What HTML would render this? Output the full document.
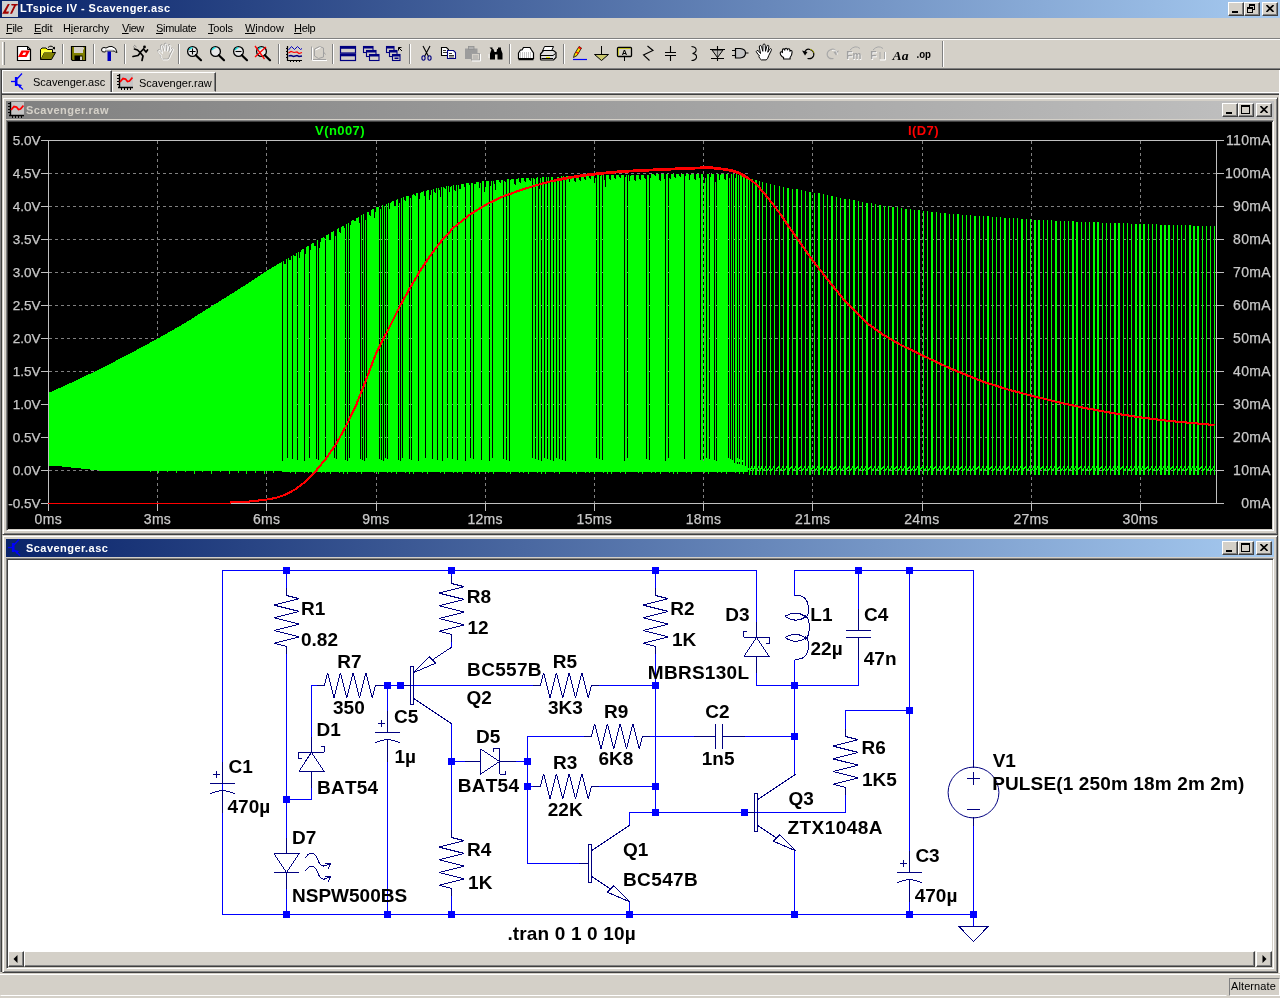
<!DOCTYPE html><html><head><meta charset="utf-8"><title>LTspice IV - Scavenger.asc</title><style>
html,body{margin:0;padding:0;}
body{will-change:transform;width:1280px;height:998px;overflow:hidden;background:#d4d0c8;position:relative;
 font-family:"Liberation Sans",sans-serif;font-size:11px;color:#000;}
div,span,svg{position:absolute;box-sizing:border-box;}
.t{white-space:pre;line-height:1;}
.titlebar{left:0;top:0;width:1280px;height:18px;background:linear-gradient(90deg,#0a246a 0%,#a6caf0 100%);}
.ttext{color:#fff;font-weight:bold;font-size:11px;letter-spacing:0.42px;}
.cap{background:#d4d0c8;border:1px solid;border-color:#fff #404040 #404040 #fff;box-shadow:inset -1px -1px 0 #808080;width:16px;height:14px;}
.menu span{top:23px;}
.menu u{text-decoration:underline;}
.hline{height:1px;left:0;width:1280px;}
.vsep{width:2px;border-left:1px solid #808080;border-right:1px solid #fff;top:44px;height:20px;}
.win{background:#d4d0c8;border:1px solid;border-color:#d4d0c8 #404040 #404040 #d4d0c8;box-shadow:inset 1px 1px 0 #fff, inset -1px -1px 0 #808080;}
.wtitle{left:3px;top:3px;height:18px;}
.wtitle.active{background:linear-gradient(90deg,#0a246a 0%,#a6caf0 100%);}
.wtitle.inactive{background:linear-gradient(90deg,#808080 0%,#c0c0c0 100%);}
.client{border:1px solid;border-color:#808080 #fff #fff #808080;box-shadow:inset 1px 1px 0 #404040, inset -1px -1px 0 #d4d0c8;}
</style></head><body><div class="titlebar"><svg style="left:2px;top:1px" width="16" height="16" viewBox="0 0 16 16"><rect x="0" y="0" width="16" height="16" fill="#d0d0d0"/><path d="M5.8 3 H7.8 L3.900 10.500 H7 L6.300 12.800 H0.200 Z" fill="#a00000"/><path d="M9.200 3 H16 L15.400 4.500 H14 L10 12.800 H8 L12 4.500 H9.600 Z" fill="#a00000"/></svg><span class="t ttext" style="left:20px;top:3px">LTspice IV - Scavenger.asc</span><div class="cap" style="left:1228px;top:2px"><div style="left:3px;top:8px;width:6px;height:2px;background:#000"></div></div><div class="cap" style="left:1244px;top:2px"><div style="left:4px;top:1px;width:6px;height:6px;border:1px solid #000;border-top-width:2px"></div><div style="left:2px;top:4px;width:6px;height:6px;border:1px solid #000;border-top-width:2px;background:#d4d0c8"></div></div><div class="cap" style="left:1262px;top:2px"><svg style="left:3px;top:2px" width="8" height="7" viewBox="0 0 8 7"><path d="M0.5 0 L7.5 7 M7.5 0 L0.5 7" stroke="#000" stroke-width="1.6" fill="none"/></svg></div></div><div class="menu" style="left:0;top:0"><span class="t" style="left:6px;letter-spacing:-0.3px"><u>F</u>ile</span><span class="t" style="left:34px;letter-spacing:-0.17px"><u>E</u>dit</span><span class="t" style="left:63px;letter-spacing:-0.09px">H<u>i</u>erarchy</span><span class="t" style="left:122px;letter-spacing:-0.46px"><u>V</u>iew</span><span class="t" style="left:156px;letter-spacing:-0.31px"><u>S</u>imulate</span><span class="t" style="left:208px;letter-spacing:-0.18px"><u>T</u>ools</span><span class="t" style="left:245px;letter-spacing:-0.05px"><u>W</u>indow</span><span class="t" style="left:294px;letter-spacing:-0.33px"><u>H</u>elp</span></div><div class="hline" style="top:38px;background:#808080"></div><div class="hline" style="top:39px;background:#fff"></div><svg style="left:0;top:40px" width="1280" height="28" viewBox="0 40 1280 28"><path d="M2.5 42 V65" stroke="#fff" stroke-width="1"/><path d="M4.5 42 V65" stroke="#808080" stroke-width="1"/><path d="M62.5 44 V64" stroke="#808080" stroke-width="1"/><path d="M63.5 44 V64" stroke="#fff" stroke-width="1"/><path d="M93.5 44 V64" stroke="#808080" stroke-width="1"/><path d="M94.5 44 V64" stroke="#fff" stroke-width="1"/><path d="M124.5 44 V64" stroke="#808080" stroke-width="1"/><path d="M125.5 44 V64" stroke="#fff" stroke-width="1"/><path d="M178.5 44 V64" stroke="#808080" stroke-width="1"/><path d="M179.5 44 V64" stroke="#fff" stroke-width="1"/><path d="M278.5 44 V64" stroke="#808080" stroke-width="1"/><path d="M279.5 44 V64" stroke="#fff" stroke-width="1"/><path d="M332.5 44 V64" stroke="#808080" stroke-width="1"/><path d="M333.5 44 V64" stroke="#fff" stroke-width="1"/><path d="M409.5 44 V64" stroke="#808080" stroke-width="1"/><path d="M410.5 44 V64" stroke="#fff" stroke-width="1"/><path d="M509.5 44 V64" stroke="#808080" stroke-width="1"/><path d="M510.5 44 V64" stroke="#fff" stroke-width="1"/><path d="M563.5 44 V64" stroke="#808080" stroke-width="1"/><path d="M564.5 44 V64" stroke="#fff" stroke-width="1"/><path d="M942.5 41 V67" stroke="#808080" stroke-width="1"/><path d="M943.5 41 V67" stroke="#fff" stroke-width="1"/><path d="M17.5 46.5 H27.5 L30.5 49.5 V60.5 H17.5 Z" fill="#fff" stroke="#000" stroke-width="1.2"/><path d="M27.5 46.5 V49.5 H30.5" fill="none" stroke="#000" stroke-width="1"/><path d="M21.500 50.500 H30 L26.500 57 H18 Z" fill="#f00"/><path d="M23.500 52.500 H26.200 L25 55 H22.200 Z" fill="#fff"/><path d="M40.5 59.5 V49.5 L42 48 H46 L47.5 49.5 H52.5 V52" fill="#ffff00" stroke="#000" stroke-width="1"/><path d="M40.5 59.5 L44 52.5 H55.5 L51.5 59.5 Z" fill="#808000" stroke="#000" stroke-width="1"/><path d="M41 50 H52 V52.5 H44 L41 58.5 Z" fill="#ffff40"/><path d="M48 47.5 Q51 44.5 54 48" fill="none" stroke="#000" stroke-width="1"/><path d="M52.5 48.8 L55 49.5 L55 46.5 Z" fill="#000"/><path d="M71.500 46.5 H85.5 V60.5 H72.5 L71.5 59.5 Z" fill="#808000" stroke="#000" stroke-width="1.2"/><rect x="74" y="47" width="9" height="6" fill="#d4d0c8"/><rect x="74.5" y="55.5" width="8" height="5" fill="#000"/><rect x="80" y="56.5" width="2" height="3.5" fill="#d4d0c8"/><rect x="82.500" y="47.5" width="1.5" height="2" fill="#d4d0c8"/><path d="M101.5 50 Q101.5 47.5 104 47.5 L106 48 Q109 46 112 46.5 Q116.500 47.500 117 52.500 L115.500 52 Q114.500 50.500 112 51 H106.500 L105 52 Q101.500 52.500 101.500 50 Z" fill="#fff" stroke="#000" stroke-width="1"/><path d="M105 50.5 H113 " stroke="#a0a0a0" stroke-width="1.6"/><rect x="107.500" y="51.5" width="3.5" height="9.5" fill="#0000c0"/><circle cx="144.5" cy="47" r="1.4" fill="#000"/><path d="M143.500 49 L140 52.500 L137.500 50 L134.500 49 M143.500 49 L146 52 L147.500 50 M140.500 52.500 L138 55.500 L133 56.500 M140.500 53 L143 56 L142 60.500" fill="none" stroke="#000" stroke-width="1.7" stroke-linejoin="round" stroke-linecap="round"/><path d="M133 46.5 L135 48 M134 45 L136.500 47" stroke="#808080" stroke-width="0.8"/><path d="M160.8 55.3 l-2.500 -3 q-1.500 -2 0 -2.500 q1 -0.300 2 1 l1.500 2 l-1.200 -6.500 q0 -1.500 1 -1.500 q1 0 1.300 1.300 l1.200 4.500 l0.200 -6 q0 -1.300 1.100 -1.300 q1.100 0 1.100 1.300 l0.300 6 l1.300 -5 q0.400 -1.200 1.300 -1 q1 0.300 0.700 1.500 l-1 5.500 l1.800 -3 q0.700 -1 1.500 -0.500 q0.700 0.500 0.200 1.600 l-2.500 5 q-1 3.500 -2.500 4.500 h-5 q-1.500 -1 -2.500 -3.400 Z" fill="#d4d0c8" stroke="#909090" stroke-width="0.9" stroke-linejoin="round"/><path d="M161.5 56 l-2.500 -3 q-1.500 -2 0 -2.500 q1 -0.300 2 1 l1.500 2 l-1.200 -6.500 q0 -1.500 1 -1.500 q1 0 1.300 1.300 l1.200 4.500 l0.200 -6 q0 -1.300 1.100 -1.300 q1.100 0 1.100 1.300 l0.300 6 l1.300 -5 q0.400 -1.200 1.300 -1 q1 0.300 0.700 1.500 l-1 5.500 l1.800 -3 q0.700 -1 1.500 -0.500 q0.700 0.500 0.200 1.600 l-2.500 5 q-1 3.500 -2.500 4.500 h-5 q-1.500 -1 -2.500 -3.400 Z" fill="none" stroke="#fff" stroke-width="0.9" stroke-linejoin="round"/><circle cx="192.5" cy="51.5" r="4.9" fill="#e8e8e8" stroke="#000" stroke-width="1.3"/><path d="M189.2 50 A4 4 0 0 1 192.5 47.6" fill="none" stroke="#00e0e0" stroke-width="1.3"/><path d="M195.8 55.2 L201.0 60.2" stroke="#000" stroke-width="2.2" stroke-linecap="round"/><path d="M189.5 51.5 H195.5 M192.5 48.5 V54.5" stroke="#000" stroke-width="1.1"/><circle cx="215.5" cy="51.5" r="4.9" fill="#e8e8e8" stroke="#000" stroke-width="1.3"/><path d="M212.2 50 A4 4 0 0 1 215.5 47.6" fill="none" stroke="#00e0e0" stroke-width="1.3"/><path d="M218.8 55.2 L224.0 60.2" stroke="#000" stroke-width="2.2" stroke-linecap="round"/><circle cx="238.5" cy="51.5" r="4.9" fill="#e8e8e8" stroke="#000" stroke-width="1.3"/><path d="M235.2 50 A4 4 0 0 1 238.5 47.6" fill="none" stroke="#00e0e0" stroke-width="1.3"/><path d="M241.8 55.2 L247.0 60.2" stroke="#000" stroke-width="2.2" stroke-linecap="round"/><path d="M235.5 51.5 H241.5" stroke="#000" stroke-width="1.1"/><circle cx="261.5" cy="51.5" r="4.9" fill="#e8e8e8" stroke="#000" stroke-width="1.3"/><path d="M258.2 50 A4 4 0 0 1 261.5 47.6" fill="none" stroke="#00e0e0" stroke-width="1.3"/><path d="M264.8 55.2 L270.0 60.2" stroke="#000" stroke-width="2.2" stroke-linecap="round"/><path d="M255.0 46 L264.5 59 M266.0 47 L255.0 57" stroke="#f00" stroke-width="1.3"/><path d="M287.500 46 V60.5 H302" fill="none" stroke="#000" stroke-width="1.2"/><path d="M286 48.5H288M286 51.5H288M286 54.5H288M286 57.5H288 M290.500 60V62M293.500 60V62M296.500 60V62M299.500 60V62" stroke="#000" stroke-width="1"/><path d="M288.500 50 L291.500 46.500 L294.500 49.500 L297.500 46.500 L300.500 49.500 L302 48.500" fill="none" stroke="#0000c0" stroke-width="1"/><path d="M288.500 53 L291 51.500 L294 52.500 L297 52 L299 53.500 L302 52.500" fill="none" stroke="#f00" stroke-width="1.2"/><path d="M288.500 56 L291 55.500 L293.500 56.500 L297 55.500 L299 56.500 L302 56" fill="none" stroke="#000080" stroke-width="1.4"/><path d="M311.500 46.500 V59.500 H326 M314.500 49 L319.500 46.500 L323.500 48 V57 L318.500 58.500 L314.500 56 Z M323.500 52 L325.500 54.500" fill="none" stroke="#a0a0a0" stroke-width="1"/><path d="M312.500 47.500 V60.500 H327 M315.500 50 L320.500 47.500" fill="none" stroke="#fff" stroke-width="1"/><rect x="340.500" y="46.5" width="15" height="6.5" fill="#d4d0c8" stroke="#000080" stroke-width="1.2"/><rect x="341" y="46.5" width="14" height="2.300" fill="#000080"/><rect x="340.500" y="54" width="15" height="6.5" fill="#d4d0c8" stroke="#000080" stroke-width="1.2"/><rect x="341" y="54" width="14" height="2.300" fill="#000080"/><rect x="363.5" y="46.5" width="9.500" height="6" fill="#d4d0c8" stroke="#000080" stroke-width="1.1"/><rect x="363.5" y="46.5" width="9.500" height="2" fill="#000080"/><rect x="366.5" y="50.5" width="9.500" height="6" fill="#d4d0c8" stroke="#000080" stroke-width="1.1"/><rect x="366.5" y="50.5" width="9.500" height="2" fill="#000080"/><rect x="369.5" y="54.5" width="9.500" height="6" fill="#d4d0c8" stroke="#000080" stroke-width="1.1"/><rect x="369.5" y="54.5" width="9.500" height="2" fill="#000080"/><rect x="386.5" y="46.5" width="7.500" height="6" fill="#d4d0c8" stroke="#000080" stroke-width="1.1"/><rect x="386.5" y="46.5" width="7.500" height="2" fill="#000080"/><rect x="389.5" y="50.5" width="7.500" height="6" fill="#d4d0c8" stroke="#000080" stroke-width="1.1"/><rect x="389.5" y="50.5" width="7.500" height="2" fill="#000080"/><rect x="392.5" y="54.5" width="7.500" height="6" fill="#d4d0c8" stroke="#000080" stroke-width="1.1"/><rect x="392.5" y="54.5" width="7.500" height="2" fill="#000080"/><rect x="394.500" y="57.500" width="4" height="1.500" fill="#000080"/><path d="M402 51 L398.500 47.500 M398.500 50.500 V47.500 H401.500" fill="none" stroke="#000" stroke-width="1"/><path d="M423 46 L428.500 56.500 M430 46 L424.500 56.500" stroke="#000" stroke-width="1.1" fill="none"/><ellipse cx="423.500" cy="58" rx="1.600" ry="2.200" fill="none" stroke="#000080" stroke-width="1.1"/><ellipse cx="429.500" cy="58" rx="1.600" ry="2.200" fill="none" stroke="#000080" stroke-width="1.1"/><path d="M441.500 47.500 H446.500 L448.500 49.500 V55.500 H441.500 Z" fill="#fff" stroke="#000" stroke-width="1.1"/><path d="M443 50.500H446M443 52.500H447" stroke="#000" stroke-width="0.8"/><path d="M447.500 50.500 H453.500 L455.500 52.500 V58.500 H447.500 Z" fill="#fff" stroke="#000080" stroke-width="1.1"/><path d="M449 53.500H452M449 55.500H454M449 57H454" stroke="#000" stroke-width="0.8"/><path d="M465 48.500 H477.500 V59 H465 Z" fill="#9c9c9c"/><rect x="468.500" y="46.500" width="5.500" height="3" fill="#b0b0b0" stroke="#909090" stroke-width="0.8"/><rect x="471.500" y="53.500" width="8" height="6.500" fill="#d4d0c8" stroke="#a0a0a0" stroke-width="1"/><path d="M473 56H478M473 58H478" stroke="#a0a0a0" stroke-width="0.8"/><path d="M472 61 H480.500 V54" fill="none" stroke="#fff" stroke-width="1"/><path d="M489.500 47.500 h3 v1.500 h0.800 l1.200 3 h1.500 l1.200 -3 h0.800 v-1.500 h3 v2 l1.500 4 v6 h-5 v-5 h-2.500 v5 h-5 v-6 l1.500 -4 Z" fill="#000"/><path d="M489 54 V58 M496 50 V52" stroke="#fff" stroke-width="0.8"/><path d="M518.500 53 L520.500 50 H522 L523.500 47.500 H530 L531.500 50 L533.500 53 V58.500 H518.500 Z" fill="#fff" stroke="#000" stroke-width="1.2"/><path d="M520 53 H532 M520 55 H532 M520 57 H532" stroke="#808080" stroke-width="0.9" stroke-dasharray="1 1"/><path d="M518.500 59.500 H533.500" stroke="#000" stroke-width="1.5"/><path d="M544.500 46.500 H553.500 L551.500 51 H542.500 Z" fill="#fff" stroke="#000" stroke-width="1"/><path d="M540.500 54 L543.500 50.500 H553.500 L556 52.500 V57.500 L553.500 60 H541 L540.500 59 Z" fill="#e0e0e0" stroke="#000" stroke-width="1.2"/><path d="M541 55.500 H553 L555.500 53.500" fill="none" stroke="#000" stroke-width="1"/><path d="M546 57.500 H550" stroke="#e0e000" stroke-width="1.2"/><path d="M541.500 58.500 H553" stroke="#000" stroke-width="1"/><path d="M573.500 57.500 L574.500 54 L579 46.500 L581.500 48 L577 55.500 Z" fill="#f8e000" stroke="#000" stroke-width="0.8"/><path d="M579 46.500 L581.500 48 L580.700 49.500 L578.200 48 Z" fill="#f00"/><path d="M576 52 L578.500 53.500" stroke="#f00" stroke-width="1.2"/><path d="M573 59.500 H587" stroke="#0000ff" stroke-width="1.2"/><path d="M601.500 46 V54" stroke="#000" stroke-width="1"/><path d="M594.500 54.500 H608.500 L601.500 60.500 Z" fill="#c0c000" fill-opacity="0.45" stroke="#000" stroke-width="1"/><rect x="617.500" y="47.500" width="14" height="9" rx="1" fill="#d4d0c8" stroke="#000" stroke-width="1.3"/><path d="M624.500 57 V61" stroke="#000" stroke-width="1"/><path d="M618.500 55.500 V48.500 H630.500" fill="none" stroke="#c8c800" stroke-width="0.8"/><text x="624.500" y="55" font-family="Liberation Sans,sans-serif" font-size="7.500" font-weight="bold" text-anchor="middle" fill="#000">A</text><path d="M647.500 46 L653 50.500 L643.500 55 L649.500 60.500" fill="none" stroke="#000" stroke-width="1.1"/><path d="M670.500 46 V52 M670.500 56 V61 M665 52.500 H676 M665 55.500 H676" fill="none" stroke="#000" stroke-width="1.1"/><path d="M691.500 46.500 Q697 47 696 51 Q695 53.500 692.500 53.500 Q697 54 696.500 57.500 Q695.500 60.500 691.500 60.500" fill="none" stroke="#000" stroke-width="1.1"/><path d="M717.500 46 V61 M710 49.500 H725 M711 58.500 H724" fill="none" stroke="#000" stroke-width="1.1"/><path d="M712 50 H723 L717.500 57.500 Z" fill="#b0b0b0" fill-opacity="0.5" stroke="#000" stroke-width="1"/><path d="M735.500 48.500 H740 Q745.500 49 745.500 53 Q745.500 57.500 740 58 H735.500 Z" fill="#c4c4c4" stroke="#000" stroke-width="1.2"/><path d="M732 50.500 H735.500 M732 55.500 H735.500 M745.500 53 H748.500" stroke="#000" stroke-width="1.1"/><path d="M759.5 56 l-2.500 -3 q-1.500 -2 0 -2.500 q1 -0.300 2 1 l1.500 2 l-1.200 -6.500 q0 -1.500 1 -1.500 q1 0 1.300 1.300 l1.200 4.500 l0.200 -6 q0 -1.300 1.100 -1.300 q1.100 0 1.100 1.300 l0.300 6 l1.300 -5 q0.400 -1.200 1.300 -1 q1 0.300 0.700 1.500 l-1 5.500 l1.800 -3 q0.700 -1 1.500 -0.500 q0.700 0.500 0.200 1.600 l-2.500 5 q-1 3.500 -2.500 4.500 h-5 q-1.500 -1 -2.500 -3.400 Z" fill="#fff" stroke="#000" stroke-width="1.0" stroke-linejoin="round"/><path d="M782 56.5 q-1.800 -1.500 -1.800 -3.500 q0 -1.300 1.200 -1.300 q0.800 0 1 1 l0 -2.500 q0 -1.300 1.200 -1.300 q1.100 0 1.200 1.200 q0 -1.800 1.300 -1.800 q1.300 0 1.300 1.700 q0.200 -1.300 1.300 -1.200 q1.200 0.100 1.200 1.500 l0 1 q0.300 -1 1.300 -0.800 q1 0.200 0.900 1.600 q0 3 -2 5.400 v1.500 h-6.500 v-1.500 Z" fill="#fff" stroke="#000" stroke-width="1.100" stroke-linejoin="round"/><path d="M804.500 53.500 Q805.500 48 810 49.500 Q815 51.500 813.500 56 Q812 59.500 807.500 58.500" fill="none" stroke="#000" stroke-width="1.2"/><path d="M802 50.500 L805 55.500 L807.500 52 Z" fill="#000"/><path d="M810 49.200 Q813.500 50 814 53" fill="none" stroke="#a0a000" stroke-width="0.9"/><path d="M836.500 53.500 Q835.500 48 831 49.500 Q826 51.500 827.500 56 Q829 59.500 833.500 58.500" fill="none" stroke="#a8a8a8" stroke-width="1.2"/><path d="M839 50.500 L836 55.500 L833.500 52 Z" fill="#a8a8a8"/><path d="M837.500 54.500 Q836.500 49 832 50.500" fill="none" stroke="#fff" stroke-width="0.8"/><text x="847" y="60" font-family="Liberation Sans,sans-serif" font-size="10" font-weight="bold" fill="#fff">Fm</text><text x="846.300" y="59.300" font-family="Liberation Sans,sans-serif" font-size="10" font-weight="bold" fill="#a0a0a0">Fm</text><path d="M850 50 Q855 44.500 860 48.500" fill="none" stroke="#a8a8a8" stroke-width="1"/><text x="871" y="60" font-family="Liberation Sans,sans-serif" font-size="10" font-weight="bold" fill="#fff">F</text><text x="870.300" y="59.300" font-family="Liberation Sans,sans-serif" font-size="10" font-weight="bold" fill="#a0a0a0">F</text><path d="M873 50 Q878 44.500 883 48.500 M884.500 52 V59 M880 52 V59" fill="none" stroke="#a8a8a8" stroke-width="1"/><path d="M885.500 52 V60 H880" fill="none" stroke="#fff" stroke-width="1"/><text x="892.500" y="59.500" font-family="Liberation Serif,serif" font-size="13" font-weight="bold" font-style="italic" fill="#000" textLength="16" lengthAdjust="spacingAndGlyphs">Aa</text><text x="916.500" y="57.500" font-family="Liberation Sans,sans-serif" font-size="11" font-weight="bold" fill="#000" textLength="14.500" lengthAdjust="spacingAndGlyphs">.op</text></svg><div class="hline" style="top:68px;background:#808080"></div><div class="hline" style="top:69px;background:#404040"></div><div style="left:0;top:70px;width:1px;height:902px;background:#808080"></div><div style="left:1px;top:70px;width:1px;height:902px;background:#404040"></div><div style="left:1279px;top:70px;width:1px;height:904px;background:#fff"></div><div style="left:2px;top:70px;width:110px;height:23px;border:1px solid;border-color:#fff #404040 #d4d0c8 #fff;box-shadow:inset -1px 0 0 #808080;background:#d4d0c8"><svg style="left:8px;top:2px" width="14" height="17" viewBox="0 0 14 17"><path d="M0 8.5 H5" stroke="#0000ff" stroke-width="1.3" fill="none"/><path d="M5.2 4 V13" stroke="#0000ff" stroke-width="2.6" fill="none"/><path d="M6 6 L11 0.5 M6 11 L12 16.5" stroke="#0000ff" stroke-width="1.2" fill="none"/><path d="M7 11 L11 12 L8.5 15 Z" fill="#0000ff"/></svg><span class="t" style="left:30px;top:6px">Scavenger.asc</span></div><div style="left:112px;top:72px;width:104px;height:20px;border:1px solid;border-color:#fff #404040 #d4d0c8 #fff;box-shadow:inset -1px 0 0 #808080;background:#d4d0c8"><svg style="left:3px;top:1px" width="17" height="16" viewBox="0 0 17 16"><rect x="4" y="0" width="13" height="13" fill="#c4c4c4"/><path d="M3.5 0 V14 M2 13.5 H17" stroke="#000" stroke-width="1.4" fill="none"/><path d="M1 1.5H3M1 4.5H3M1 7.5H3M1 10.5H3 M5.5 14V16M8.5 14V16M11.5 14V16M14.5 14V16" stroke="#000" stroke-width="1" fill="none"/><path d="M4 8 L7 4.5 L9.5 5 L11.5 7.5 L13.5 7 L16.5 3.5" stroke="#f00" stroke-width="1.8" fill="none"/></svg><span class="t" style="left:26px;top:5px">Scavenger.raw</span></div><div class="hline" style="top:92px;left:2px;width:1277px;background:#fff"></div><div class="hline" style="top:93px;left:2px;width:1277px;background:#808080"></div><div class="hline" style="top:94px;left:2px;width:1277px;background:#404040"></div><div class="win" style="left:2px;top:97px;width:1276px;height:438px"><div class="wtitle inactive" style="width:1268px"><svg style="left:1px;top:1px" width="17" height="16" viewBox="0 0 17 16"><rect x="4" y="0" width="13" height="13" fill="#c4c4c4"/><path d="M3.5 0 V14 M2 13.5 H17" stroke="#000" stroke-width="1.4" fill="none"/><path d="M1 1.5H3M1 4.5H3M1 7.5H3M1 10.5H3 M5.5 14V16M8.5 14V16M11.5 14V16M14.5 14V16" stroke="#000" stroke-width="1" fill="none"/><path d="M4 8 L7 4.5 L9.5 5 L11.5 7.5 L13.5 7 L16.5 3.5" stroke="#f00" stroke-width="1.8" fill="none"/></svg><span class="t ttext" style="left:20px;top:4px;color:#d4d0c8;letter-spacing:0.45px">Scavenger.raw</span><div class="cap" style="left:1250px;top:2px"><svg style="left:3px;top:2px" width="8" height="7" viewBox="0 0 8 7"><path d="M0.5 0 L7.5 7 M7.5 0 L0.5 7" stroke="#000" stroke-width="1.6" fill="none"/></svg></div><div class="cap" style="left:1232px;top:2px"><div style="left:2px;top:1px;width:9px;height:9px;border:1px solid #000;border-top-width:2px"></div></div><div class="cap" style="left:1216px;top:2px"><div style="left:3px;top:8px;width:6px;height:2px;background:#000"></div></div></div><div class="client" style="left:3px;top:22px;width:1268px;height:411px"><svg style="left:1px;top:1px" width="1264" height="407" viewBox="8 122 1264 407" shape-rendering="crispEdges" font-family="Liberation Sans,sans-serif"><rect x="8" y="122" width="1264" height="407" fill="#000"/><path d="M157.5 141V503M266.5 141V503M376.5 141V503M485.5 141V503M594.5 141V503M703.5 141V503M812.5 141V503M922.5 141V503M1031.5 141V503M1140.5 141V503M49 173.5H1216M49 206.5H1216M49 239.5H1216M49 272.5H1216M49 305.5H1216M49 338.5H1216M49 371.5H1216M49 404.5H1216M49 437.5H1216M49 470.5H1216" stroke="#808080" stroke-width="1" stroke-dasharray="3 3" fill="none"/><path d="M48 393.2 L49 392.7 L50 392.3 L51 391.8 L52 391.4 L53 390.9 L54 390.5 L55 390.0 L56 389.6 L57 389.1 L58 388.7 L59 388.2 L60 387.8 L61 387.3 L62 386.9 L63 386.4 L64 386.0 L65 385.5 L66 385.1 L67 384.6 L68 384.2 L69 383.7 L70 383.3 L71 382.8 L72 382.4 L73 381.9 L74 381.5 L75 381.0 L76 380.5 L77 380.0 L78 379.6 L79 379.1 L80 378.6 L81 378.1 L82 377.6 L83 377.1 L84 376.7 L85 376.2 L86 375.7 L87 375.2 L88 374.7 L89 374.2 L90 373.8 L91 373.3 L92 372.8 L93 372.3 L94 371.8 L95 371.4 L96 370.9 L97 370.4 L98 369.9 L99 369.4 L100 368.9 L101 368.5 L102 368.0 L103 367.5 L104 367.0 L105 366.5 L106 365.9 L107 365.4 L108 364.9 L109 364.4 L110 363.9 L111 363.4 L112 362.8 L113 362.3 L114 361.8 L115 361.3 L116 360.8 L117 360.2 L118 359.7 L119 359.2 L120 358.7 L121 358.2 L122 357.6 L123 357.1 L124 356.6 L125 356.1 L126 355.6 L127 355.1 L128 354.5 L129 354.0 L130 353.5 L131 353.0 L132 352.4 L133 351.9 L134 351.4 L135 350.8 L136 350.3 L137 349.7 L138 349.2 L139 348.7 L140 348.1 L141 347.6 L142 347.1 L143 346.5 L144 346.0 L145 345.4 L146 344.9 L147 344.4 L148 343.8 L149 343.3 L150 342.8 L151 342.2 L152 341.7 L153 341.1 L154 340.6 L155 340.1 L156 339.5 L157 339.0 L158 338.4 L159 337.9 L160 337.3 L161 336.7 L162 336.1 L163 335.6 L164 335.0 L165 334.4 L166 333.9 L167 333.3 L168 332.7 L169 332.1 L170 331.6 L171 331.0 L172 330.4 L173 329.9 L174 329.3 L175 328.7 L176 328.1 L177 327.6 L178 327.0 L179 326.4 L180 325.9 L181 325.3 L182 324.7 L183 324.1 L184 323.6 L185 323.0 L186 322.4 L187 321.7 L188 321.1 L189 320.5 L190 319.9 L191 319.2 L192 318.6 L193 318.0 L194 317.3 L195 316.7 L196 316.1 L197 315.4 L198 314.8 L199 314.2 L200 313.6 L201 312.9 L202 312.3 L203 311.7 L204 311.0 L205 310.4 L206 309.8 L207 309.1 L208 308.5 L209 307.9 L210 307.3 L211 306.6 L212 306.0 L213 305.4 L214 304.8 L215 304.1 L216 303.5 L217 302.9 L218 302.2 L219 301.6 L220 301.0 L221 300.4 L222 299.8 L223 299.1 L224 298.5 L225 297.9 L226 297.2 L227 296.6 L228 296.0 L229 295.4 L230 294.8 L231 294.1 L232 293.5 L233 292.9 L234 292.2 L235 291.6 L236 291.0 L237 290.4 L238 289.8 L239 289.1 L240 288.5 L241 287.8 L242 287.2 L243 286.5 L244 285.9 L245 285.2 L246 284.5 L247 283.9 L248 283.2 L249 282.5 L250 281.9 L251 281.2 L252 280.6 L253 279.9 L254 279.2 L255 278.6 L256 277.9 L257 277.3 L258 276.6 L259 275.9 L260 275.3 L261 274.6 L262 273.9 L263 273.3 L264 272.6 L265 272.0 L266 271.3 L267 270.7 L268 270.1 L269 269.5 L270 268.9 L271 268.3 L272 267.7 L273 267.1 L274 266.5 L275 265.9 L276 265.3 L277 264.7 L278 264.1 L279 263.5 L280 262.9 L281 262.4 L282 261.8 L282 471.0 L281 471.0 L280 471.0 L279 471.0 L278 471.0 L277 471.0 L276 471.0 L275 471.0 L274 471.0 L273 471.0 L272 471.0 L271 471.0 L270 471.0 L269 471.0 L268 471.0 L267 471.0 L266 471.0 L265 471.0 L264 471.0 L263 471.0 L262 471.0 L261 471.0 L260 471.0 L259 471.0 L258 471.0 L257 471.0 L256 471.0 L255 471.0 L254 471.0 L253 471.0 L252 471.0 L251 471.0 L250 471.0 L249 471.0 L248 471.0 L247 471.0 L246 471.0 L245 471.0 L244 471.0 L243 471.0 L242 471.0 L241 471.0 L240 471.0 L239 471.0 L238 471.0 L237 471.0 L236 471.0 L235 471.0 L234 471.0 L233 471.0 L232 471.0 L231 471.0 L230 471.0 L229 471.0 L228 471.0 L227 471.0 L226 471.0 L225 471.0 L224 471.0 L223 471.0 L222 471.0 L221 471.0 L220 471.0 L219 471.0 L218 471.0 L217 471.0 L216 471.0 L215 471.0 L214 471.0 L213 471.0 L212 471.0 L211 471.0 L210 471.0 L209 471.0 L208 471.0 L207 471.0 L206 471.0 L205 471.0 L204 471.0 L203 471.0 L202 471.0 L201 471.0 L200 471.0 L199 471.0 L198 471.0 L197 471.0 L196 471.0 L195 471.0 L194 471.0 L193 471.0 L192 471.0 L191 471.0 L190 471.0 L189 471.0 L188 471.0 L187 471.0 L186 471.0 L185 471.0 L184 471.0 L183 471.0 L182 471.0 L181 471.0 L180 471.0 L179 471.0 L178 471.0 L177 471.0 L176 471.0 L175 471.0 L174 471.0 L173 471.0 L172 471.0 L171 471.0 L170 471.0 L169 471.0 L168 471.0 L167 471.0 L166 471.0 L165 471.0 L164 471.0 L163 471.0 L162 471.0 L161 471.0 L160 471.0 L159 471.0 L158 471.0 L157 471.0 L156 471.0 L155 471.0 L154 471.0 L153 471.0 L152 471.0 L151 471.0 L150 471.0 L149 471.0 L148 471.0 L147 471.0 L146 471.0 L145 471.0 L144 471.0 L143 471.0 L142 471.0 L141 471.0 L140 471.0 L139 471.0 L138 471.0 L137 471.0 L136 471.0 L135 471.0 L134 471.0 L133 471.0 L132 471.0 L131 471.0 L130 471.0 L129 471.0 L128 471.0 L127 471.0 L126 471.0 L125 471.0 L124 471.0 L123 471.0 L122 471.0 L121 471.0 L120 471.0 L119 471.0 L118 471.0 L117 471.0 L116 471.0 L115 471.0 L114 471.0 L113 471.0 L112 471.0 L111 471.0 L110 471.0 L109 471.0 L108 471.0 L107 471.0 L106 471.0 L105 471.0 L104 471.0 L103 471.0 L102 471.0 L101 471.0 L100 471.0 L99 470.4 L98 470.3 L97 470.2 L96 470.1 L95 470.0 L94 469.9 L93 469.8 L92 469.7 L91 469.6 L90 469.5 L89 469.4 L88 469.2 L87 469.1 L86 469.0 L85 468.9 L84 468.8 L83 468.7 L82 468.6 L81 468.5 L80 468.4 L79 468.3 L78 468.2 L77 468.1 L76 468.0 L75 467.9 L74 467.8 L73 467.7 L72 467.6 L71 467.5 L70 467.4 L69 467.3 L68 467.2 L67 467.1 L66 467.0 L65 466.9 L64 466.8 L63 466.6 L62 466.5 L61 466.4 L60 466.3 L59 466.2 L58 466.1 L57 466.0 L56 465.9 L55 465.8 L54 465.7 L53 465.6 L52 465.5 L51 466.2 L50 466.4 L49 466.6 L48 466.8ZM283 261.2 L284 260.6 L285 260.0 L286 259.4 L287 258.8 L287 462.0 L283 462.0ZM288 258.2 L289 257.6 L290 257.0 L291 256.4 L292 255.8 L292 462.0 L288 462.0ZM293 255.2 L294 254.6 L295 254.0 L296 253.4 L297 252.8 L297 462.0 L293 462.0ZM298 252.2 L299 251.6 L300 251.0 L301 250.4 L302 249.8 L303 249.2 L304 248.6 L304 462.0 L298 462.0ZM305 248.0 L306 247.4 L307 246.8 L308 246.2 L309 245.6 L309 462.0 L305 462.0ZM310 245.0 L311 244.4 L312 243.8 L313 243.2 L314 242.6 L315 242.0 L316 241.4 L316 462.0 L310 462.0ZM317 240.8 L318 240.2 L318 462.0 L317 462.0ZM319 239.6 L320 239.0 L321 238.4 L322 237.9 L323 237.3 L324 236.7 L325 236.1 L325 462.0 L319 462.0ZM326 235.6 L327 235.0 L328 234.4 L329 233.9 L330 233.3 L331 232.7 L332 232.1 L333 231.6 L334 231.0 L334 462.0 L326 462.0ZM335 230.4 L336 229.9 L336 462.0 L335 462.0ZM337 229.3 L338 228.7 L339 228.1 L340 227.6 L341 227.0 L342 226.4 L343 225.9 L344 225.3 L345 224.7 L345 462.0 L337 462.0ZM346 224.1 L347 223.6 L347 462.0 L346 462.0ZM348 223.0 L349 222.4 L349 462.0 L348 462.0ZM350 221.9 L351 221.3 L352 220.8 L353 220.2 L354 219.7 L355 219.1 L356 218.6 L357 218.0 L358 217.5 L359 216.9 L360 216.4 L360 462.0 L350 462.0ZM361 215.8 L362 215.2 L362 462.0 L361 462.0ZM363 214.7 L364 214.1 L364 462.0 L363 462.0ZM365 213.6 L366 213.0 L366 462.0 L365 462.0ZM367 212.5 L368 211.9 L369 211.4 L370 210.8 L371 210.3 L372 209.7 L373 209.2 L374 208.6 L375 208.1 L376 207.5 L377 207.1 L378 206.8 L379 206.4 L379 462.0 L367 462.0ZM380 206.0 L381 205.6 L381 462.0 L380 462.0ZM382 205.2 L383 204.9 L383 462.0 L382 462.0ZM384 204.5 L385 204.1 L385 462.0 L384 462.0ZM386 203.8 L387 203.4 L387 462.0 L386 462.0ZM388 203.0 L389 202.6 L390 202.2 L391 201.9 L392 201.5 L393 201.1 L394 200.8 L395 200.4 L396 200.0 L397 199.6 L398 199.2 L398 462.0 L388 462.0ZM399 198.9 L400 198.5 L400 462.0 L399 462.0ZM401 198.2 L402 197.9 L402 462.0 L401 462.0ZM403 197.6 L404 197.3 L405 196.9 L406 196.6 L407 196.3 L408 196.0 L409 195.7 L409 462.0 L403 462.0ZM410 195.4 L411 195.1 L411 462.0 L410 462.0ZM412 194.8 L413 194.5 L414 194.2 L415 193.9 L416 193.5 L417 193.2 L418 192.9 L418 462.0 L412 462.0ZM419 192.6 L420 192.3 L421 192.1 L422 191.8 L423 191.6 L424 191.3 L425 191.1 L425 462.0 L419 462.0ZM426 190.9 L427 190.6 L428 190.4 L429 190.1 L430 189.9 L431 189.7 L432 189.4 L432 462.0 L426 462.0ZM433 189.2 L434 188.9 L435 188.7 L436 188.5 L437 188.2 L437 462.0 L433 462.0ZM438 188.0 L439 187.7 L440 187.5 L441 187.3 L442 187.2 L442 462.0 L438 462.0ZM443 187.0 L444 186.9 L445 186.7 L446 186.5 L447 186.4 L447 462.0 L443 462.0ZM448 186.2 L449 186.1 L450 185.9 L451 185.8 L452 185.6 L452 462.0 L448 462.0ZM453 185.4 L454 185.3 L455 185.1 L456 185.0 L457 184.8 L457 462.0 L453 462.0ZM458 184.6 L459 184.5 L460 184.3 L461 184.2 L462 184.0 L463 183.9 L464 183.8 L465 183.6 L465 462.0 L458 462.0ZM466 183.5 L467 183.4 L468 183.3 L469 183.1 L470 183.0 L470 462.0 L466 462.0ZM471 182.9 L472 182.8 L473 182.7 L473 462.0 L471 462.0ZM474 182.5 L475 182.4 L476 182.3 L477 182.2 L478 182.1 L479 181.9 L480 181.8 L481 181.7 L481 462.0 L474 462.0ZM482 181.6 L483 181.4 L484 181.3 L485 181.2 L486 181.1 L487 181.0 L488 181.0 L489 180.9 L489 462.0 L482 462.0ZM490 180.8 L491 180.7 L492 180.6 L492 462.0 L490 462.0ZM493 180.5 L494 180.5 L495 180.4 L496 180.3 L497 180.2 L498 180.1 L499 180.0 L500 180.0 L501 179.9 L502 179.8 L503 179.7 L503 462.0 L493 462.0ZM504 179.6 L505 179.5 L506 179.5 L506 462.0 L504 462.0ZM507 179.4 L508 179.3 L509 179.2 L509 462.0 L507 462.0ZM510 179.1 L511 179.0 L512 179.0 L513 178.9 L514 178.8 L515 178.7 L516 178.6 L517 178.5 L518 178.5 L519 178.4 L520 178.3 L521 178.3 L522 178.2 L523 178.2 L524 178.1 L525 178.1 L526 178.0 L527 178.0 L528 177.9 L529 177.9 L530 177.8 L531 177.8 L532 177.7 L532 462.0 L510 462.0ZM533 177.7 L534 177.6 L535 177.6 L535 462.0 L533 462.0ZM536 177.5 L537 177.5 L538 177.4 L538 462.0 L536 462.0ZM539 177.4 L540 177.3 L541 177.3 L541 462.0 L539 462.0ZM542 177.2 L543 177.2 L544 177.1 L544 462.0 L542 462.0ZM545 177.1 L546 177.0 L547 177.0 L547 462.0 L545 462.0ZM548 176.9 L549 176.9 L550 176.8 L550 462.0 L548 462.0ZM551 176.8 L552 176.7 L553 176.7 L553 462.0 L551 462.0ZM554 176.6 L555 176.6 L556 176.6 L556 462.0 L554 462.0ZM557 176.5 L558 176.5 L559 176.5 L559 462.0 L557 462.0ZM560 176.5 L561 176.4 L562 176.4 L562 462.0 L560 462.0ZM563 176.4 L564 176.3 L565 176.3 L565 462.0 L563 462.0ZM566 176.3 L567 176.3 L568 176.2 L569 176.2 L570 176.2 L571 176.1 L572 176.1 L573 176.1 L574 176.1 L575 176.0 L576 176.0 L577 176.0 L578 176.0 L579 175.9 L580 175.9 L581 175.9 L582 175.8 L583 175.8 L584 175.8 L585 175.8 L586 175.7 L587 175.7 L588 175.7 L589 175.6 L590 175.6 L591 175.6 L592 175.6 L593 175.5 L594 175.5 L595 175.5 L596 175.5 L596 462.0 L566 462.0ZM597 175.4 L598 175.4 L599 175.4 L599 462.0 L597 462.0ZM600 175.4 L601 175.4 L602 175.3 L602 462.0 L600 462.0ZM603 175.3 L604 175.3 L605 175.3 L606 175.3 L607 175.2 L608 175.2 L609 175.2 L610 175.2 L611 175.2 L612 175.1 L613 175.1 L614 175.1 L615 175.1 L616 175.1 L617 175.1 L618 175.0 L619 175.0 L620 175.0 L621 175.0 L622 175.0 L623 174.9 L624 174.9 L624 462.0 L603 462.0ZM625 174.9 L626 174.9 L627 174.9 L627 462.0 L625 462.0ZM628 174.8 L629 174.8 L630 174.8 L631 174.8 L632 174.8 L633 174.7 L634 174.7 L635 174.7 L636 174.7 L637 174.7 L638 174.6 L639 174.6 L640 174.6 L641 174.6 L642 174.6 L643 174.6 L644 174.5 L645 174.5 L646 174.5 L646 462.0 L628 462.0ZM647 174.5 L648 174.5 L649 174.5 L649 462.0 L647 462.0ZM650 174.5 L651 174.5 L652 174.4 L653 174.4 L654 174.4 L655 174.4 L656 174.4 L657 174.4 L658 174.4 L659 174.4 L660 174.3 L661 174.3 L662 174.3 L663 174.3 L664 174.3 L665 174.3 L665 462.0 L650 462.0ZM666 174.3 L667 174.3 L668 174.2 L668 462.0 L666 462.0ZM669 174.2 L670 174.2 L671 174.2 L672 174.2 L673 174.2 L674 174.2 L675 174.2 L676 174.1 L677 174.1 L678 174.1 L679 174.1 L680 174.1 L681 174.1 L682 174.1 L683 174.1 L684 174.0 L684 462.0 L669 462.0ZM685 174.0 L686 174.0 L687 174.0 L688 174.0 L689 174.0 L690 174.0 L691 174.0 L692 173.9 L693 173.9 L694 173.9 L695 173.9 L696 173.9 L697 173.9 L698 173.9 L699 173.9 L700 173.8 L700 462.0 L685 462.0ZM701 173.8 L702 173.8 L703 173.8 L703 462.0 L701 462.0ZM704 173.8 L705 173.8 L706 173.8 L706 462.0 L704 462.0ZM707 173.8 L708 173.7 L709 173.7 L709 462.0 L707 462.0ZM710 173.7 L711 173.7 L712 173.7 L713 173.7 L714 173.7 L714 462.0 L710 462.0ZM715 173.7 L716 173.7 L716 462.0 L715 462.0ZM717 173.7 L718 173.6 L719 173.6 L720 173.6 L721 173.6 L722 173.6 L723 173.6 L724 173.6 L725 173.6 L726 173.6 L727 173.6 L728 173.5 L728 462.0 L717 462.0ZM729 173.5 L730 173.5 L730 467.0 L729 467.0ZM731 173.5 L732 173.5 L732 467.0 L731 467.0ZM733 173.7 L734 173.8 L734 467.0 L733 467.0ZM735 174.0 L736 174.2 L737 174.3 L737 467.0 L735 467.0ZM738 174.5 L739 174.9 L739 467.0 L738 467.0ZM740 175.2 L741 175.6 L742 176.0 L742 467.0 L740 467.0ZM743 176.4 L744 176.7 L745 177.1 L745 467.0 L743 467.0ZM746 177.4 L747 177.8 L748 177.8 L748 467.0 L746 467.0Z" fill="#00ff00"/><path d="M284.5 259.6v4M285.5 259.0v5M289.5 256.6v3M290.5 256.0v4M294.5 253.6v2M295.5 253.0v3M299.5 250.6v7M300.5 250.0v2M305.5 247.0v7M310.5 244.0v6M314.5 241.6v4M315.5 241.0v5M319.5 238.6v9M320.5 238.0v4M324.5 235.7v2M329.5 232.9v7M330.5 232.3v8M335.5 229.4v7M339.5 227.1v5M340.5 226.6v6M344.5 224.3v4M350.5 220.9v4M354.5 218.7v2M355.5 218.1v3M359.5 215.9v7M365.5 212.6v7M369.5 210.4v5M370.5 209.8v6M374.5 207.6v10M375.5 207.1v5M380.5 205.0v4M384.5 203.5v2M389.5 201.6v7M390.5 201.2v2M394.5 199.8v6M395.5 199.4v7M399.5 197.9v5M404.5 196.3v4M405.5 195.9v5M410.5 194.4v4M414.5 193.2v2M415.5 192.9v3M419.5 191.6v7M420.5 191.3v2M424.5 190.3v6M429.5 189.1v11M430.5 188.9v6M434.5 187.9v4M435.5 187.7v5M439.5 186.7v3M440.5 186.5v10M444.5 185.9v2M445.5 185.7v3M449.5 185.1v7M450.5 184.9v2M454.5 184.3v6M455.5 184.1v7M459.5 183.5v5M460.5 183.3v6M464.5 182.8v4M469.5 182.1v3M474.5 181.5v2M475.5 181.4v3M479.5 180.9v7M480.5 180.8v2M484.5 180.3v12M485.5 180.2v7M490.5 179.8v6M494.5 179.5v4M495.5 179.4v11M499.5 179.0v3M500.5 179.0v4M504.5 178.6v2M505.5 178.5v3M510.5 178.1v2M514.5 177.8v6M515.5 177.7v7M519.5 177.4v5M520.5 177.3v6M524.5 177.1v4M525.5 177.1v5M529.5 176.9v3M530.5 176.8v4M534.5 176.6v2M539.5 176.4v13M540.5 176.3v2M545.5 176.1v7M549.5 175.9v5M554.5 175.6v4M555.5 175.6v5M560.5 175.5v4M564.5 175.3v2M569.5 175.2v7M570.5 175.2v2M574.5 175.1v6M575.5 175.0v7M579.5 174.9v5M580.5 174.9v6M584.5 174.8v4M585.5 174.8v5M589.5 174.6v3M590.5 174.6v4M594.5 174.5v8M595.5 174.5v3M600.5 174.4v2M604.5 174.3v6M605.5 174.3v13M609.5 174.2v5M610.5 174.2v6M614.5 174.1v4M615.5 174.1v5M619.5 174.0v3M620.5 174.0v4M625.5 173.9v3M629.5 173.8v7M630.5 173.8v2M634.5 173.7v6M635.5 173.7v7M639.5 173.6v5M640.5 173.6v6M644.5 173.5v4M645.5 173.5v5M650.5 173.5v4M654.5 173.4v2M655.5 173.4v3M659.5 173.4v7M660.5 173.3v8M664.5 173.3v6M669.5 173.2v5M670.5 173.2v6M674.5 173.2v4M675.5 173.2v5M679.5 173.1v3M680.5 173.1v4M685.5 173.0v3M689.5 173.0v7M690.5 173.0v2M694.5 172.9v6M695.5 172.9v7M699.5 172.9v5M704.5 172.8v10M705.5 172.8v5M710.5 172.7v4M715.5 172.7v9M719.5 172.6v7M720.5 172.6v2M724.5 172.6v6M725.5 172.6v7M729.5 172.5v5M735.5 173.0v5" stroke="#000" stroke-width="1"/><path d="M282 461H728L748 466.5V471.5H282Z" fill="#00ff00"/><path d="M287.5 458V462M292.5 459V462M297.5 460V462M309.5 458V462M316.5 459V462M318.5 460V462M334.5 458V462M336.5 459V462M345.5 460V462M349.5 458V462M360.5 459V462M362.5 460V462M366.5 458V462M379.5 459V462M381.5 460V462M385.5 458V462M387.5 459V462M398.5 460V462M402.5 458V462M409.5 459V462M411.5 460V462M425.5 458V462M432.5 459V462M437.5 460V462M447.5 458V462M452.5 459V462M457.5 460V462M470.5 458V462M473.5 459V462M481.5 460V462M492.5 458V462M503.5 459V462M506.5 460V462M532.5 458V462M535.5 459V462M538.5 460V462M544.5 458V462M547.5 459V462M550.5 460V462M556.5 458V462M559.5 459V462M562.5 460V462M596.5 458V462M599.5 459V462M602.5 460V462M627.5 458V462M646.5 459V462M649.5 460V462M668.5 458V462M684.5 459V462M700.5 460V462M706.5 458V462M709.5 459V462M714.5 460V462M728.5 458V462M730.5 459V462M732.5 460V462M737.5 458V462M739.5 459V462M742.5 460V462" stroke="#00ff00" stroke-width="1"/><path d="M150.5 470V472M158.5 470V473M167.5 470V472M176.5 470V473M185.5 470V472M194.5 470V474M202.5 470V472M211.5 470V474M220.5 470V472M229.5 470V474M238.5 470V473M246.5 470V474M255.5 470V473M264.5 470V474M273.5 470V473M282.5 470V472M286.5 470V472M290.5 470V473M295.5 470V474M299.5 470V472M304.5 470V473M308.5 470V473M312.5 470V474M317.5 470V472M321.5 470V473M325.5 470V473M330.5 470V474M334.5 470V472M339.5 470V473M343.5 470V474M347.5 470V474M352.5 470V472M356.5 470V473M361.5 470V474M365.5 470V472M369.5 470V472M374.5 470V473M378.5 470V474M383.5 470V472M387.5 470V473M391.5 470V473M396.5 470V474M400.5 470V472M405.5 470V473M409.5 470V474M413.5 470V474M418.5 470V472M422.5 470V473M427.5 470V474M431.5 470V472M435.5 470V472M440.5 470V473M444.5 470V474M449.5 470V472M453.5 470V473M457.5 470V473M462.5 470V474M466.5 470V472M471.5 470V473M475.5 470V474M479.5 470V474M484.5 470V472M488.5 470V473M493.5 470V474M497.5 470V472M501.5 470V472M506.5 470V473M510.5 470V474M515.5 470V472M519.5 470V473M523.5 470V473M528.5 470V474M532.5 470V472M537.5 470V473M541.5 470V474M545.5 470V474M550.5 470V472M554.5 470V473M559.5 470V474M563.5 470V472M567.5 470V472M572.5 470V473M576.5 470V474M581.5 470V472M585.5 470V473M589.5 470V473M594.5 470V474M598.5 470V472M603.5 470V473M607.5 470V474M611.5 470V474M616.5 470V472M620.5 470V473M625.5 470V474M629.5 470V472M633.5 470V472M638.5 470V473M642.5 470V474M647.5 470V472M651.5 470V473M655.5 470V473M660.5 470V474M664.5 470V472M669.5 470V473M673.5 470V474M677.5 470V474M682.5 470V472M686.5 470V473M691.5 470V474M695.5 470V472M699.5 470V472M704.5 470V473M708.5 470V474M713.5 470V472M717.5 470V473M721.5 470V473M726.5 470V474M730.5 470V472M735.5 470V473M739.5 470V474M743.5 470V474" stroke="#00ff00" stroke-width="1"/><rect x="748" y="170" width="9" height="292" fill="#000"/><path d="M749.5 178.5V475M752.5 179.4V475M759.5 181.2V475M762.5 182.0V475M766.5 183.0V475M770.5 184.0V475M774.5 184.9V475M779.5 185.9V475M783.5 186.7V475M792.5 188.5V475M801.5 190.1V475M805.5 190.8V475M814.5 192.5V475M823.5 194.3V475M827.5 195.1V475M836.5 196.9V475M840.5 197.7V475M849.5 199.4V475M858.5 201.0V475M862.5 201.8V475M871.5 203.4V475M875.5 204.1V475M884.5 205.6V475M888.5 206.1V475M897.5 207.4V475M901.5 208.0V475M910.5 209.3V475M914.5 209.8V475M923.5 211.0V475M927.5 211.4V475M936.5 212.3V475M940.5 212.6V475M949.5 213.5V475M953.5 213.8V475M962.5 214.6V475M966.5 214.9V475M970.5 215.2V475M979.5 215.8V475M983.5 216.1V475M992.5 216.7V475M996.5 217.0V475M1000.5 217.3V475M1009.5 217.9V475M1013.5 218.1V475M1017.5 218.4V475M1026.5 219.0V475M1030.5 219.2V475M1043.5 219.9V475M1047.5 220.1V475M1051.5 220.3V475M1060.5 220.8V475M1064.5 221.0V475M1068.5 221.2V475M1081.5 221.8V475M1085.5 222.0V475M1089.5 222.1V475M1102.5 222.6V475M1106.5 222.7V475M1110.5 222.9V475M1123.5 223.3V475M1127.5 223.4V475M1131.5 223.6V475M1148.5 224.1V475M1152.5 224.3V475M1156.5 224.4V475M1173.5 225.0V475M1177.5 225.1V475M1181.5 225.2V475M1185.5 225.3V475M1202.5 225.7V475M1206.5 225.8V475M1210.5 225.9V475M1214.5 226.0V475" stroke="#00ff00" stroke-width="1"/><path d="M756.0 180.2V475M788.0 187.5V475M797.0 189.2V475M810.0 191.6V475M819.0 193.3V475M832.0 195.9V475M845.0 198.5V475M854.0 200.1V475M867.0 202.5V475M880.0 204.8V475M893.0 206.7V475M906.0 208.6V475M919.0 210.4V475M932.0 211.8V475M945.0 213.0V475M958.0 214.2V475M975.0 215.5V475M988.0 216.4V475M1005.0 217.6V475M1022.0 218.7V475M1035.0 219.5V475M1039.0 219.7V475M1056.0 220.5V475M1073.0 221.3V475M1077.0 221.6V475M1094.0 222.3V475M1098.0 222.4V475M1115.0 223.0V475M1119.0 223.1V475M1136.0 223.7V475M1140.0 223.8V475M1144.0 224.0V475M1161.0 224.5V475M1165.0 224.7V475M1169.0 224.8V475M1190.0 225.4V475M1194.0 225.5V475M1198.0 225.6V475" stroke="#00ff00" stroke-width="2"/><path d="M748 468L750 471L752 466.5L753 471L755 466.5L756 471L759 466.5L760 471L762 466.5L763 471L766 466.5L767 471L770 466.5L771 471L774 466.5L775 471L779 466.5L780 471L783 466.5L784 471L787 466.5L788 471L792 466.5L793 471L796 466.5L797 471L801 466.5L802 471L805 466.5L806 471L809 466.5L810 471L814 466.5L815 471L818 466.5L819 471L823 466.5L824 471L827 466.5L828 471L831 466.5L832 471L836 466.5L837 471L840 466.5L841 471L844 466.5L845 471L849 466.5L850 471L853 466.5L854 471L858 466.5L859 471L862 466.5L863 471L866 466.5L867 471L871 466.5L872 471L875 466.5L876 471L879 466.5L880 471L884 466.5L885 471L888 466.5L889 471L892 466.5L893 471L897 466.5L898 471L901 466.5L902 471L905 466.5L906 471L910 466.5L911 471L914 466.5L915 471L918 466.5L919 471L923 466.5L924 471L927 466.5L928 471L931 466.5L932 471L936 466.5L937 471L940 466.5L941 471L944 466.5L945 471L949 466.5L950 471L953 466.5L954 471L957 466.5L958 471L962 466.5L963 471L966 466.5L967 471L970 466.5L971 471L974 466.5L975 471L979 466.5L980 471L983 466.5L984 471L987 466.5L988 471L992 466.5L993 471L996 466.5L997 471L1000 466.5L1001 471L1004 466.5L1005 471L1009 466.5L1010 471L1013 466.5L1014 471L1017 466.5L1018 471L1021 466.5L1022 471L1026 466.5L1027 471L1030 466.5L1031 471L1034 466.5L1035 471L1038 466.5L1039 471L1043 466.5L1044 471L1047 466.5L1048 471L1051 466.5L1052 471L1055 466.5L1056 471L1060 466.5L1061 471L1064 466.5L1065 471L1068 466.5L1069 471L1072 466.5L1073 471L1076 466.5L1077 471L1081 466.5L1082 471L1085 466.5L1086 471L1089 466.5L1090 471L1093 466.5L1094 471L1097 466.5L1098 471L1102 466.5L1103 471L1106 466.5L1107 471L1110 466.5L1111 471L1114 466.5L1115 471L1118 466.5L1119 471L1123 466.5L1124 471L1127 466.5L1128 471L1131 466.5L1132 471L1135 466.5L1136 471L1139 466.5L1140 471L1143 466.5L1144 471L1148 466.5L1149 471L1152 466.5L1153 471L1156 466.5L1157 471L1160 466.5L1161 471L1164 466.5L1165 471L1168 466.5L1169 471L1173 466.5L1174 471L1177 466.5L1178 471L1181 466.5L1182 471L1185 466.5L1186 471L1189 466.5L1190 471L1193 466.5L1194 471L1197 466.5L1198 471L1202 466.5L1203 471L1206 466.5L1207 471L1210 466.5L1211 471L1214 466.5" fill="none" stroke="#00ff00" stroke-width="1.2"/><path d="M41 140.5H1224 M48.5 140V511 M1216.5 140V503 M48 503.5H1224" stroke="#c0c0c0" stroke-width="1" fill="none"/><path d="M41 140.5H48M1217 140.5H1224M41 173.5H48M1217 173.5H1224M41 206.5H48M1217 206.5H1224M41 239.5H48M1217 239.5H1224M41 272.5H48M1217 272.5H1224M41 305.5H48M1217 305.5H1224M41 338.5H48M1217 338.5H1224M41 371.5H48M1217 371.5H1224M41 404.5H48M1217 404.5H1224M41 437.5H48M1217 437.5H1224M41 470.5H48M1217 470.5H1224M41 503.5H48M1217 503.5H1224M157.5 503V511M266.5 503V511M376.5 503V511M485.5 503V511M594.5 503V511M703.5 503V511M812.5 503V511M922.5 503V511M1031.5 503V511M1140.5 503V511" stroke="#c0c0c0" stroke-width="1" fill="none"/><path d="M48 503.5H231" stroke="#ff0000" stroke-width="1"/><polyline points="230,502.5 250,501.5 266,499.7 276,497.8 285.5,494.7 295,489.5 305,482 315.8,471 326,458.5 336,444.3 346,426 356,405.6 366,380 376,353.6 389.6,326.8 400,306 410,288 420,271 430,256 441,241.5 453.6,227.6 470,214.5 487,204 503,196.5 520.8,190 537,185 554,180.5" fill="none" stroke="#ff0000" stroke-width="2.1" shape-rendering="crispEdges"/><polyline points="554,180.5 571,177.3 588,174.8 605,173 621.5,171.5 655,169.8 680,168.7 703,167.8 712,167.8 722,169 731,170.5 739,173 748,178" fill="none" stroke="#ff0000" stroke-width="2.8" shape-rendering="crispEdges"/><polyline points="739,173 748,178 756,184 764,193 772.7,204 781,215 789.5,227.6 801,244 813,261 830,282.5 846.6,303 866.8,323 883.6,335 900,344.5 921.5,355 950.8,368.7 984,382 1008,389.5 1031,395.6 1058,402.2 1085,408 1112,413 1140.5,417.4 1165,420.5 1186,422.5 1214.5,425" fill="none" stroke="#ff0000" stroke-width="2.1" shape-rendering="crispEdges"/><g fill="#c8c8c8" stroke="#c8c8c8" stroke-width="0.25" font-size="13.5" shape-rendering="auto"><text x="40.500" y="145" text-anchor="end">5.0V</text><text x="40.500" y="178" text-anchor="end">4.5V</text><text x="40.500" y="211" text-anchor="end">4.0V</text><text x="40.500" y="244" text-anchor="end">3.5V</text><text x="40.500" y="277" text-anchor="end">3.0V</text><text x="40.500" y="310" text-anchor="end">2.5V</text><text x="40.500" y="343" text-anchor="end">2.0V</text><text x="40.500" y="376" text-anchor="end">1.5V</text><text x="40.500" y="409" text-anchor="end">1.0V</text><text x="40.500" y="442" text-anchor="end">0.5V</text><text x="40.500" y="475" text-anchor="end">0.0V</text><text x="40.500" y="508" text-anchor="end">-0.5V</text><text x="1271" y="145" text-anchor="end" font-size="14" letter-spacing="0.35">110mA</text><text x="1271" y="178" text-anchor="end" font-size="14" letter-spacing="0.35">100mA</text><text x="1271" y="211" text-anchor="end" font-size="14" letter-spacing="0.35">90mA</text><text x="1271" y="244" text-anchor="end" font-size="14" letter-spacing="0.35">80mA</text><text x="1271" y="277" text-anchor="end" font-size="14" letter-spacing="0.35">70mA</text><text x="1271" y="310" text-anchor="end" font-size="14" letter-spacing="0.35">60mA</text><text x="1271" y="343" text-anchor="end" font-size="14" letter-spacing="0.35">50mA</text><text x="1271" y="376" text-anchor="end" font-size="14" letter-spacing="0.35">40mA</text><text x="1271" y="409" text-anchor="end" font-size="14" letter-spacing="0.35">30mA</text><text x="1271" y="442" text-anchor="end" font-size="14" letter-spacing="0.35">20mA</text><text x="1271" y="475" text-anchor="end" font-size="14" letter-spacing="0.35">10mA</text><text x="1271" y="508" text-anchor="end" font-size="14" letter-spacing="0.35">0mA</text><text x="48.3" y="524" text-anchor="middle" font-size="14" letter-spacing="0.3">0ms</text><text x="157.5" y="524" text-anchor="middle" font-size="14" letter-spacing="0.3">3ms</text><text x="266.7" y="524" text-anchor="middle" font-size="14" letter-spacing="0.3">6ms</text><text x="375.9" y="524" text-anchor="middle" font-size="14" letter-spacing="0.3">9ms</text><text x="485.1" y="524" text-anchor="middle" font-size="14" letter-spacing="0.3">12ms</text><text x="594.3" y="524" text-anchor="middle" font-size="14" letter-spacing="0.3">15ms</text><text x="703.5" y="524" text-anchor="middle" font-size="14" letter-spacing="0.3">18ms</text><text x="812.7" y="524" text-anchor="middle" font-size="14" letter-spacing="0.3">21ms</text><text x="921.9" y="524" text-anchor="middle" font-size="14" letter-spacing="0.3">24ms</text><text x="1031.1" y="524" text-anchor="middle" font-size="14" letter-spacing="0.3">27ms</text><text x="1140.3" y="524" text-anchor="middle" font-size="14" letter-spacing="0.3">30ms</text></g><text x="340" y="135" text-anchor="middle" font-size="13" letter-spacing="0.4" font-weight="bold" fill="#00ff00" shape-rendering="auto">V(n007)</text><text x="923.500" y="135" text-anchor="middle" font-size="13" letter-spacing="0.4" font-weight="bold" fill="#ff0000" shape-rendering="auto">I(D7)</text></svg></div></div><div class="win" style="left:2px;top:535px;width:1276px;height:438px"><div class="wtitle active" style="width:1268px"><svg style="left:2px;top:0px" width="14" height="17" viewBox="0 0 14 17"><path d="M0 8.5 H5" stroke="#0000ff" stroke-width="1.3" fill="none"/><path d="M5.2 4 V13" stroke="#0000ff" stroke-width="2.6" fill="none"/><path d="M6 6 L11 0.5 M6 11 L12 16.5" stroke="#0000ff" stroke-width="1.2" fill="none"/><path d="M7 11 L11 12 L8.5 15 Z" fill="#0000ff"/></svg><span class="t ttext" style="left:20px;top:4px;color:#fff;letter-spacing:0.45px">Scavenger.asc</span><div class="cap" style="left:1250px;top:2px"><svg style="left:3px;top:2px" width="8" height="7" viewBox="0 0 8 7"><path d="M0.5 0 L7.5 7 M7.5 0 L0.5 7" stroke="#000" stroke-width="1.6" fill="none"/></svg></div><div class="cap" style="left:1232px;top:2px"><div style="left:2px;top:1px;width:9px;height:9px;border:1px solid #000;border-top-width:2px"></div></div><div class="cap" style="left:1216px;top:2px"><div style="left:3px;top:8px;width:6px;height:2px;background:#000"></div></div></div><div class="client" style="left:3px;top:22px;width:1268px;height:411px"><div style="left:1px;top:1px;width:1264px;height:391px;background:#fff"></div><svg style="left:1px;top:1px" width="1264" height="391" viewBox="8 560 1264 391" shape-rendering="crispEdges"><path d="M222.5 914.5 L222.5 570.5 L756.5 570.5 L756.5 621.5M222.5 914.5 L973.5 914.5M286.5 570.5 L286.5 589.13M286.5 652.87 L286.5 837.5M286.5 888.5 L286.5 914.5M286.5 799.5 L311.5 799.5 L311.5 786.5M311.5 736.5 L311.5 685.5 L318.13 685.5M381.87 685.5 L534.13 685.5M597.87 685.5 L655.5 685.5M387.5 685.5 L387.5 710.5M387.5 761.5 L387.5 914.5M451.5 570.5 L451.5 577.13M451.5 640.87 L451.5 646.5M451.5 723.5 L451.5 831.13M451.5 894.87 L451.5 914.5M451.5 761.5 L464.5 761.5M515.5 761.5 L527.5 761.5M585.13 736.5 L527.5 736.5 L527.5 863.5 L578.5 863.5M648.87 736.5 L693.5 736.5M744.5 736.5 L794.5 736.5M527.5 786.5 L534.13 786.5M597.87 786.5 L655.5 786.5M655.5 570.5 L655.5 589.13M655.5 652.87 L655.5 812.5M629.5 825.5 L629.5 812.5 L845.5 812.5 L845.5 792.87M629.5 901.5 L629.5 914.5M794.5 595.5 L794.5 570.5 L973.5 570.5 L973.5 761.5M794.5 659.5 L794.5 774.5M794.5 850.5 L794.5 914.5M756.5 672.5 L756.5 685.5 L858.5 685.5 L858.5 659.5M858.5 570.5 L858.5 608.5M909.5 570.5 L909.5 850.5M909.5 901.5 L909.5 914.5M909.5 710.5 L845.5 710.5 L845.5 730.13M973.5 825.5 L973.5 926.5M222.5 761.5 L222.5 812.5" fill="none" stroke="#0000ff" stroke-width="1"/><path d="M286.5 588.13 L286.5 595.5 L299.24 598.69 L273.76 605.06 L299.24 611.43 L273.76 617.8 L299.24 624.17 L273.76 630.54 L299.24 636.91 L273.76 643.28 L286.5 646.46 L286.5 653.83M451.5 576.13 L451.5 583.5 L464.24 586.69 L438.76 593.06 L464.24 599.43 L438.76 605.8 L464.24 612.17 L438.76 618.54 L464.24 624.91 L438.76 631.28 L451.5 634.46 L451.5 641.83M655.5 588.13 L655.5 595.5 L668.24 598.69 L642.76 605.06 L668.24 611.43 L642.76 617.8 L668.24 624.17 L642.76 630.54 L668.24 636.91 L642.76 643.28 L655.5 646.46 L655.5 653.83M451.5 830.13 L451.5 837.5 L464.24 840.69 L438.76 847.06 L464.24 853.43 L438.76 859.8 L464.24 866.17 L438.76 872.54 L464.24 878.91 L438.76 885.28 L451.5 888.46 L451.5 895.83M845.5 729.13 L845.5 736.5 L858.24 739.69 L832.76 746.06 L858.24 752.43 L832.76 758.8 L858.24 765.17 L832.76 771.54 L858.24 777.91 L832.76 784.28 L845.5 787.46 L845.5 794.83M317.13 685.5 L324.5 685.5 L327.69 672.76 L334.06 698.24 L340.43 672.76 L346.8 698.24 L353.17 672.76 L359.54 698.24 L365.91 672.76 L372.28 698.24 L375.46 685.5 L382.83 685.5M533.13 685.5 L540.5 685.5 L543.69 672.76 L550.06 698.24 L556.43 672.76 L562.8 698.24 L569.17 672.76 L575.54 698.24 L581.91 672.76 L588.28 698.24 L591.46 685.5 L598.83 685.5M584.13 736.5 L591.5 736.5 L594.69 723.76 L601.06 749.24 L607.43 723.76 L613.8 749.24 L620.17 723.76 L626.54 749.24 L632.91 723.76 L639.28 749.24 L642.46 736.5 L649.83 736.5M533.13 786.5 L540.5 786.5 L543.69 773.76 L550.06 799.24 L556.43 773.76 L562.8 799.24 L569.17 773.76 L575.54 799.24 L581.91 773.76 L588.28 799.24 L591.46 786.5 L598.83 786.5M222.5 761.5 L222.5 783.8M209.76 783.8 L235.24 783.8M209.76 794.15 A25.48 25.48 0 0 1 235.24 794.15M222.5 790.65 L222.5 813.46M212.63 774.64 L219.63 774.64M216.13 771.14 L216.13 778.14M387.5 710.5 L387.5 732.8M374.76 732.8 L400.24 732.8M374.76 743.15 A25.48 25.48 0 0 1 400.24 743.15M387.5 739.65 L387.5 762.46M377.63 723.64 L384.63 723.64M381.13 720.14 L381.13 727.14M909.5 850.5 L909.5 872.8M896.76 872.8 L922.24 872.8M896.76 883.15 A25.48 25.48 0 0 1 922.24 883.15M909.5 879.65 L909.5 902.46M899.63 863.64 L906.63 863.64M903.13 860.14 L903.13 867.14M858.5 608.5 L858.5 630.8M845.76 630.8 L871.24 630.8M845.76 637.17 L871.24 637.17M858.5 637.17 L858.5 660.46M693.5 736.5 L715.8 736.5M715.8 723.76 L715.8 749.24M722.17 723.76 L722.17 749.24M722.17 736.5 L745.46 736.5M311.5 736.5 L311.5 752.43M298.76 752.43 L324.24 752.43M298.76 771.54 L324.24 771.54 L311.5 752.43 L298.76 771.54M311.5 771.54 L311.5 788.46M298.76 752.43 L298.76 758.8 L301.94 758.8M324.24 752.43 L324.24 746.06 L321.06 746.06M756.5 621.5 L756.5 637.43M743.76 637.43 L769.24 637.43M743.76 656.54 L769.24 656.54 L756.5 637.43 L743.76 656.54M756.5 656.54 L756.5 673.46M743.76 637.43 L743.76 631.06 L746.94 631.06M769.24 637.43 L769.24 643.8 L766.06 643.8M464.5 761.5 L480.43 761.5M480.43 748.76 L480.43 774.24 L499.54 761.5 L480.43 748.76M499.54 748.76 L499.54 774.24M499.54 761.5 L516.46 761.5M499.54 748.76 L493.17 748.76 L493.17 751.94M499.54 774.24 L505.91 774.24 L505.91 771.06M286.5 837.5 L286.5 853.43M273.76 853.43 L299.24 853.43 L286.5 872.54 L273.76 853.43M273.76 872.54 L299.24 872.54M286.5 872.54 L286.5 889.46M305.6 857.83 Q308.2 853.13 311.5 853.13 Q315.2 853.13 317.7 859.33 Q320.2 866.53 324.2 866.03 L330.8 863.53M325.2 863.53 L330.8 863.53 L327.9 869.43M305.6 870.89 Q308.2 866.19 311.5 866.19 Q315.2 866.19 317.7 872.39 Q320.2 879.59 324.2 879.09 L330.8 876.59M325.2 876.59 L330.8 876.59 L327.9 882.49M400.5 685.5 L410.06 685.5M410.06 666.39 H413.24 V704.61 H410.06 ZM432.35 660.02 L451.46 647.28M413.24 698.24 L451.46 723.72M413.24 672.76 L429.17 656.83 L435.54 663.2 L413.24 672.76M578.5 863.5 L588.06 863.5M588.06 844.39 H591.24 V882.61 H588.06 ZM591.24 850.76 L629.46 825.28M591.24 876.24 L610.35 888.98M629.46 901.72 L607.17 892.17 L613.54 885.8 L629.46 901.72M744.5 812.5 L754.06 812.5M754.06 793.39 H757.24 V831.61 H754.06 ZM757.24 799.76 L795.46 774.28M757.24 825.24 L776.35 837.98M795.46 850.72 L773.17 841.17 L779.54 834.8 L795.46 850.72M794.5 595.5 H797.5 C810.7 595.5 810.7 615.74 805 618.24M805 615.24 C810.7 618.74 810.7 635.97 805 639.47M805 636.47 C810.7 638.97 810.7 659.21 797.5 659.21 H794.5M785.1 616.24 Q795.5 609.74 806 616.74 Q795.5 623.74 785.1 616.24M785.1 637.47 Q795.5 630.97 806 637.97 Q795.5 644.97 785.1 637.47M973.5 759.65 L973.5 768.02M973.5 816.98 L973.5 826.35M967 778 L980 778M973.5 771.5 L973.5 784.5M967 809 L980 809M959 926.5 H988 L973.5 941.7 Z" fill="none" stroke="#000080" stroke-width="1"/><circle cx="973.5" cy="792.5" r="25.4" fill="none" stroke="#000080" stroke-width="1" shape-rendering="auto"/><g fill="#0000ff"><rect x="283" y="567" width="7" height="7"/><rect x="448" y="567" width="7" height="7"/><rect x="652" y="567" width="7" height="7"/><rect x="855" y="567" width="7" height="7"/><rect x="906" y="567" width="7" height="7"/><rect x="384" y="682" width="7" height="7"/><rect x="397" y="682" width="7" height="7"/><rect x="652" y="682" width="7" height="7"/><rect x="791" y="682" width="7" height="7"/><rect x="906" y="707" width="7" height="7"/><rect x="791" y="733" width="7" height="7"/><rect x="448" y="758" width="7" height="7"/><rect x="524" y="758" width="7" height="7"/><rect x="524" y="783" width="7" height="7"/><rect x="652" y="783" width="7" height="7"/><rect x="283" y="796" width="7" height="7"/><rect x="652" y="809" width="7" height="7"/><rect x="741" y="809" width="7" height="7"/><rect x="283" y="911" width="7" height="7"/><rect x="384" y="911" width="7" height="7"/><rect x="448" y="911" width="7" height="7"/><rect x="626" y="911" width="7" height="7"/><rect x="791" y="911" width="7" height="7"/><rect x="906" y="911" width="7" height="7"/><rect x="970" y="911" width="7" height="7"/></g><g font-family="Liberation Sans,sans-serif" font-size="19" font-weight="bold" fill="#000" shape-rendering="auto" style="font-kerning:none"><text x="301" y="615">R1</text><text x="301" y="646.3">0.82</text><text x="337.3" y="667.5">R7</text><text x="333" y="714.3">350</text><text x="394.1" y="723">C5</text><text x="316.5" y="735.5">D1</text><text x="394.4" y="763">1µ</text><text x="466.8" y="602.5">R8</text><text x="467.5" y="633.8">12</text><text x="467.1" y="675.6" textLength="74.4" lengthAdjust="spacing">BC557B</text><text x="466.6" y="703.8">Q2</text><text x="476" y="742.8">D5</text><text x="457.8" y="791.5" textLength="61.2" lengthAdjust="spacing">BAT54</text><text x="228.6" y="773">C1</text><text x="317" y="793.5" textLength="61.2" lengthAdjust="spacing">BAT54</text><text x="227.5" y="813">470µ</text><text x="292" y="843.5">D7</text><text x="292" y="901.8">NSPW500BS</text><text x="467" y="856.3">R4</text><text x="468.1" y="888.8">1K</text><text x="507.4" y="939.5" textLength="128.3" lengthAdjust="spacing">.tran 0 1 0 10µ</text><text x="552.8" y="667.5">R5</text><text x="548" y="714.3">3K3</text><text x="604" y="718">R9</text><text x="598.5" y="764.5">6K8</text><text x="553" y="769.2">R3</text><text x="547.8" y="816.4">22K</text><text x="670.3" y="615">R2</text><text x="671.9" y="646.3">1K</text><text x="647.8" y="678.8" textLength="101.2" lengthAdjust="spacing">MBRS130L</text><text x="725.3" y="621.3">D3</text><text x="705.3" y="718">C2</text><text x="701.8" y="764.7">1n5</text><text x="623.1" y="856.3">Q1</text><text x="623" y="885.6" textLength="74.8" lengthAdjust="spacing">BC547B</text><text x="810.3" y="621.3">L1</text><text x="810.5" y="654.5">22µ</text><text x="864.1" y="621.3">C4</text><text x="863.8" y="665">47n</text><text x="861.5" y="754.3">R6</text><text x="861.9" y="786.3">1K5</text><text x="788.5" y="805">Q3</text><text x="787.5" y="834.4" textLength="95.1" lengthAdjust="spacing">ZTX1048A</text><text x="915.4" y="862.1">C3</text><text x="914.7" y="901.6">470µ</text><text x="992.7" y="767.3">V1</text><text x="992.2" y="789.6" textLength="252.2" lengthAdjust="spacing">PULSE(1 250m 18m 2m 2m)</text></g></svg><div style="left:1px;top:392px;width:1264px;height:16px;background:#e9e7e3"><div class="cap" style="left:0;top:0;width:16px;height:16px"><svg style="left:4px;top:3px" width="5" height="8" viewBox="0 0 5 8"><path d="M4.500 0 V8 L0.500 4 Z" fill="#000"/></svg></div><div class="cap" style="left:16px;top:0;width:1231px;height:16px"></div><div class="cap" style="left:1248px;top:0;width:16px;height:16px"><svg style="left:5px;top:3px" width="5" height="8" viewBox="0 0 5 8"><path d="M0.500 0 V8 L4.500 4 Z" fill="#000"/></svg></div></div></div></div><div class="hline" style="top:973px;background:#d4d0c8"></div><div class="hline" style="top:974px;background:#fff"></div><div style="left:1229px;top:978px;width:51px;height:18px;border:1px solid;border-color:#808080 #fff #fff #808080"><span class="t" style="left:1px;top:2px;letter-spacing:0.1px">Alternate</span></div><div style="left:0;top:978px;width:1227px;height:18px;border:1px solid;border-color:#d4d0c8 #d4d0c8 #fff #d4d0c8"></div></body></html>
